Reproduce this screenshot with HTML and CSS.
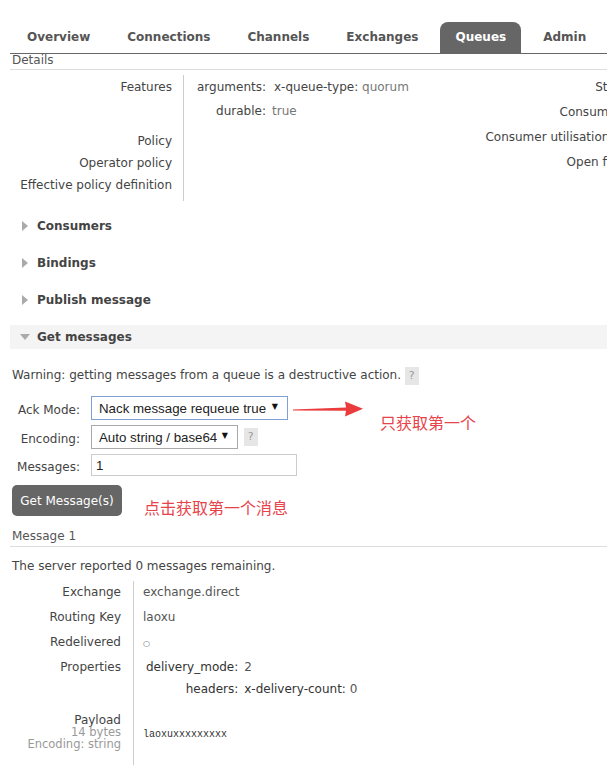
FILE: index.html
```html
<!DOCTYPE html>
<html lang="zh">
<head>
    <meta charset="UTF-8">
    <meta name="viewport" content="width=device-width, initial-scale=1.0">
    <title>RabbitMQ Management - Queue</title>
    <link rel="stylesheet" href="styles.css">
</head>
<body>
    <div class="page">
        <ul class="tabs">
            <li>Overview</li>
            <li>Connections</li>
            <li>Channels</li>
            <li>Exchanges</li>
            <li class="active">Queues</li>
            <li>Admin</li>
        </ul>

        <h3 class="sub-title">Details</h3>
        <div class="details">
            <div class="facts">
                <div class="label first">Features</div>
                <div class="value first">
                    <div class="kv">
                        <span class="key">arguments:</span>
                        <span><span class="key inner">x-queue-type:</span> <span class="val">quorum</span></span>
                        <span class="key">durable:</span>
                        <span class="val">true</span>
                    </div>
                </div>
                <div class="label">Policy</div>
                <div class="value"></div>
                <div class="label">Operator policy</div>
                <div class="value"></div>
                <div class="label last">Effective policy definition</div>
                <div class="value last"></div>
            </div>
            <div class="facts-right">
                <div>State</div>
                <div>Consumers</div>
                <div>Consumer utilisation <span class="help">?</span></div>
                <div>Open files</div>
            </div>
        </div>

        <div class="section"><span class="arrow-right"></span>Consumers</div>
        <div class="section"><span class="arrow-right"></span>Bindings</div>
        <div class="section"><span class="arrow-right"></span>Publish message</div>
        <div class="section open"><span class="arrow-down"></span>Get messages</div>

        <p class="warning">Warning: getting messages from a queue is a destructive action. <span class="help">?</span></p>

        <div class="get-form">
            <label>Ack Mode:</label>
            <div><span class="select-wrap focus"><select class="ack"><option>Nack message requeue true</option></select></span></div>
            <label>Encoding:</label>
            <div><span class="select-wrap"><select class="enc"><option>Auto string / base64</option></select></span> <span class="help">?</span></div>
            <label>Messages:</label>
            <div><input class="count" type="text" value="1"></div>
        </div>
        <button class="get-button">Get Message(s)</button>

        <h3 class="sub-title msg">Message 1</h3>
        <p class="remaining">The server reported 0 messages remaining.</p>

        <div class="message">
            <div class="m-label">Exchange</div>
            <div class="m-value">exchange.direct</div>
            <div class="m-label">Routing Key</div>
            <div class="m-value">laoxu</div>
            <div class="m-label">Redelivered</div>
            <div class="m-value"><span class="circle">○</span></div>
            <div class="m-label">Properties</div>
            <div class="m-value">
                <div class="props">
                    <span class="pkey">delivery_mode:</span><span class="pval">2</span>
                    <span class="pkey">headers:</span><span><span class="pkey">x-delivery-count:</span> <span class="pval">0</span></span>
                </div>
            </div>
            <div class="m-label payload">Payload<br><span class="small">14 bytes</span><br><span class="small">Encoding: string</span></div>
            <div class="m-value payload"><pre>laoxuxxxxxxxxx</pre></div>
        </div>

        <svg class="red-arrow" width="72" height="20" viewBox="0 0 72 20">
            <polygon points="0,9.6 53,7.6 52,1.5 70,8.8 52,16.5 53,10.8 0,10.6" fill="#ea3b3d"/>
        </svg>
        <div class="note note-ack">只获取第一个</div>
        <div class="note note-get">点击获取第一个消息</div>
    </div>
</body>
</html>
```

FILE: styles.css
```css
body {
    margin: 0;
    overflow: hidden;
    background: #fff;
    color: #484848;
    font-family: "DejaVu Sans", Verdana, sans-serif;
    font-size: 12px;
}
.page {
    position: relative;
    width: 630px;
    padding-left: 10px;
}
.tabs {
    display: flex;
    list-style: none;
    margin: 0;
    padding: 22px 0 0 2px;
    border-bottom: 1px solid #666;
}
.tabs li {
    padding: 0 15px;
    margin-right: 7px;
    line-height: 31px;
    font-weight: bold;
    color: #555;
    border-radius: 8px 8px 0 0;
}
.tabs li.active {
    background: #666;
    color: #fff;
}
.sub-title {
    margin: 0;
    padding: 0 0 3px 2px;
    font-size: 12px;
    font-weight: normal;
    line-height: 12px;
    color: #555;
    border-bottom: 1px solid #ddd;
}
.details {
    display: flex;
    margin-top: 5px;
}
.facts {
    display: grid;
    grid-template-columns: 173px auto;
}
.label {
    text-align: right;
    padding-right: 11px;
    line-height: 22px;
    color: #444;
}
.value {
    border-left: 1px solid #ccc;
    padding-left: 13px;
    line-height: 22px;
}
.label.first, .value.first {
    line-height: 24px;
    padding-bottom: 7px;
}
.label.last, .value.last {
    padding-bottom: 5px;
}
.kv {
    display: grid;
    grid-template-columns: 69px auto;
    column-gap: 6px;
}
.kv .key {
    text-align: right;
    color: #444;
}
.kv .key.inner {
    margin-left: 2px;
}
.val {
    color: #777;
}
.facts-right {
    flex: 1;
    text-align: right;
    padding-right: 13px;
    line-height: 25px;
    color: #444;
}
.help {
    display: inline-block;
    padding: 0 4px;
    line-height: 18px;
    background: #e6e6e6;
    color: #999;
    font-size: 11px;
}
.section {
    display: flex;
    align-items: center;
    height: 24px;
    margin-bottom: 13px;
    padding-left: 12px;
    font-weight: bold;
    color: #444;
}
.details + .section {
    margin-top: 13px;
}
.section.open {
    background: #f4f4f4;
    margin-bottom: 0;
    padding-left: 10px;
}
.arrow-right {
    width: 0;
    height: 0;
    border-top: 5px solid transparent;
    border-bottom: 5px solid transparent;
    border-left: 6px solid #aaa;
    margin-right: 9px;
}
.arrow-down {
    width: 0;
    height: 0;
    border-left: 5px solid transparent;
    border-right: 5px solid transparent;
    border-top: 6px solid #aaa;
    margin-right: 7px;
}
.warning {
    margin: 17px 0 0 2px;
    line-height: 18px;
    color: #444;
}
.get-form {
    display: grid;
    grid-template-columns: 70px auto;
    column-gap: 11px;
    row-gap: 5px;
    align-items: center;
    margin-top: 11px;
}
.get-form label {
    text-align: right;
    color: #444;
    padding-top: 3px;
}
.select-wrap {
    position: relative;
    display: inline-block;
    vertical-align: middle;
}
.select-wrap::after {
    content: "▼";
    position: absolute;
    right: 10px;
    top: 6px;
    font-size: 8px;
    color: #111;
    pointer-events: none;
}
select {
    -webkit-appearance: none;
    appearance: none;
    display: block;
    margin: 0;
    height: 24px;
    padding: 0 0 0 7px;
    border: 1px solid #a9a9a9;
    background: #fff;
    color: #222;
    font-family: "Liberation Sans", Arial, sans-serif;
    font-size: 13.3px;
}
.select-wrap.focus select {
    border-color: #7f9fd6;
}
select.ack { width: 197px; }
select.enc { width: 147px; }
.get-form .help {
    margin-left: 2px;
    vertical-align: middle;
}
.count {
    display: block;
    width: 206px;
    height: 22px;
    box-sizing: border-box;
    margin: 0;
    padding: 0 4px;
    border: 1px solid #ccc;
    font-family: "Liberation Sans", Arial, sans-serif;
    font-size: 13.3px;
    color: #222;
}
.get-button {
    display: block;
    margin: 9px 0 0 2px;
    width: 110px;
    height: 31px;
    border: none;
    border-radius: 5px;
    background: #666;
    color: #fff;
    font-family: "DejaVu Sans", Verdana, sans-serif;
    font-size: 12px;
}
.sub-title.msg {
    margin-top: 13px;
    line-height: 14px;
}
.remaining {
    margin: 10px 0 0 2px;
    line-height: 18px;
    color: #444;
}
.message {
    display: grid;
    grid-template-columns: 123px auto;
    margin-top: 6px;
}
.m-label {
    text-align: right;
    padding: 3px 12px 6px 0;
    line-height: 16px;
    color: #444;
}
.m-value {
    border-left: 1px solid #ccc;
    padding: 3px 0 6px 9px;
    line-height: 16px;
    color: #555;
}
.circle {
    display: inline-block;
    font-size: 8px;
    line-height: 16px;
    color: #666;
    vertical-align: top;
    padding-top: 2px;
    height: 14px;
}
.props {
    display: grid;
    grid-template-columns: auto 1fr;
    column-gap: 6px;
    row-gap: 6px;
    padding-left: 3px;
    width: max-content;
}
.pkey {
    text-align: right;
    color: #333;
}
.pval {
    color: #555;
}
.m-label.payload {
    padding-top: 11px;
    padding-bottom: 15px;
    line-height: 12px;
}
.m-label .small {
    color: #999;
    font-size: 11.5px;
}
.m-value.payload {
    padding-top: 24px;
    padding-bottom: 15px;
}
.m-value pre {
    margin: 0;
    font-family: "Liberation Mono", "Courier New", monospace;
    font-size: 10px;
    line-height: 16px;
    color: #333;
}
.red-arrow {
    position: absolute;
    left: 293px;
    top: 400px;
}
.note {
    position: absolute;
    font-family: "Noto Sans CJK SC", sans-serif;
    font-size: 16px;
    line-height: 22px;
    color: #e8424a;
}
.note-ack {
    left: 380px;
    top: 411px;
}
.note-get {
    left: 144px;
    top: 496px;
}
```
